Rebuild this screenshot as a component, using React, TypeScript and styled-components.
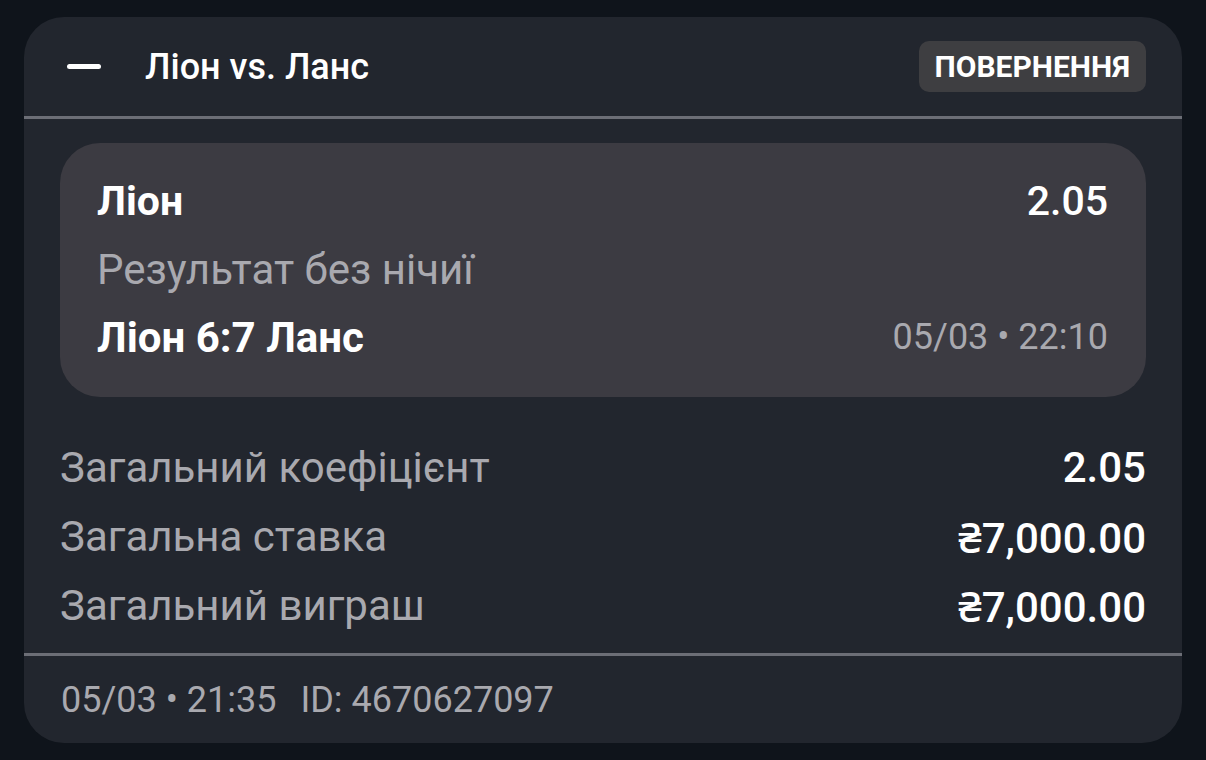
import React from "react";
import styled, { createGlobalStyle } from "styled-components";

const GlobalStyle = createGlobalStyle`
  * { box-sizing: border-box; }
  body {
    margin: 0;
    background: #0f141b;
    font-family: Roboto, "Noto Sans", sans-serif;
    color: #ffffff;
  }
`;

const Card = styled.div`
  margin: 17px 24px 0 24px;
  width: 1158px;
  height: 726px;
  background: #22262e;
  border-radius: 40px;
  overflow: hidden;
  display: flex;
  flex-direction: column;
`;

const Header = styled.div`
  height: 102px;
  flex-shrink: 0;
  display: flex;
  align-items: center;
  padding: 0 36px 0 43px;
  border-bottom: 3px solid #6c6e76;
`;

const Minus = styled.span`
  width: 34px;
  height: 5px;
  border-radius: 3px;
  background: #ffffff;
  margin-right: 44px;
`;

const Title = styled.h1`
  margin: 0;
  flex: 1;
  font-size: 36px;
  font-weight: 500;
  color: #ffffff;
`;

const Badge = styled.span`
  height: 51px;
  padding: 0 16px;
  display: flex;
  align-items: center;
  background: #3e3e41;
  border-radius: 10px;
  font-size: 30px;
  font-weight: 700;
  color: #ffffff;
`;

const Body = styled.div`
  padding: 24px 36px 0 36px;
`;

const Selection = styled.div`
  background: #3c3b42;
  border-radius: 40px;
  padding: 24px 38px 26px 37px;
`;

const Line = styled.div`
  display: flex;
  justify-content: space-between;
  align-items: center;
  height: 68px;
`;

const Strong = styled.span<{ $size?: number; $weight?: number }>`
  font-size: ${(p) => p.$size || 41}px;
  font-weight: ${(p) => p.$weight || 700};
  color: #ffffff;
`;

const Muted = styled.span<{ $size?: number }>`
  font-size: ${(p) => p.$size || 42}px;
  font-weight: 400;
  color: #a9a9af;
`;

const Summary = styled.div`
  padding: 36px 0 13px 0;
`;

const SummaryRow = styled.div`
  display: flex;
  justify-content: space-between;
  align-items: center;
  height: 69px;
`;

const Footer = styled.div`
  border-top: 3px solid #6c6e76;
  flex: 1;
  display: flex;
  align-items: center;
  padding: 0 36px 0 37px;
  gap: 24px;
`;

const summary = [
  { label: "Загальний коефіцієнт", value: "2.05" },
  { label: "Загальна ставка", value: "₴7,000.00" },
  { label: "Загальний виграш", value: "₴7,000.00" },
];

export default function App() {
  return (
    <>
      <GlobalStyle />
      <Card>
        <Header>
          <Minus />
          <Title>Ліон vs. Ланс</Title>
          <Badge>ПОВЕРНЕННЯ</Badge>
        </Header>
        <Body>
          <Selection>
            <Line>
              <Strong>Ліон</Strong>
              <Strong $weight={500}>2.05</Strong>
            </Line>
            <Line>
              <Muted>Результат без нічиї</Muted>
            </Line>
            <Line>
              <Strong $size={42}>Ліон 6:7 Ланс</Strong>
              <Muted $size={36}>05/03 • 22:10</Muted>
            </Line>
          </Selection>
          <Summary>
            {summary.map((row) => (
              <SummaryRow key={row.label}>
                <Muted>{row.label}</Muted>
                <Strong $size={42} $weight={500}>
                  {row.value}
                </Strong>
              </SummaryRow>
            ))}
          </Summary>
        </Body>
        <Footer>
          <Muted $size={36}>05/03 • 21:35</Muted>
          <Muted $size={36}>ID: 4670627097</Muted>
        </Footer>
      </Card>
    </>
  );
}
